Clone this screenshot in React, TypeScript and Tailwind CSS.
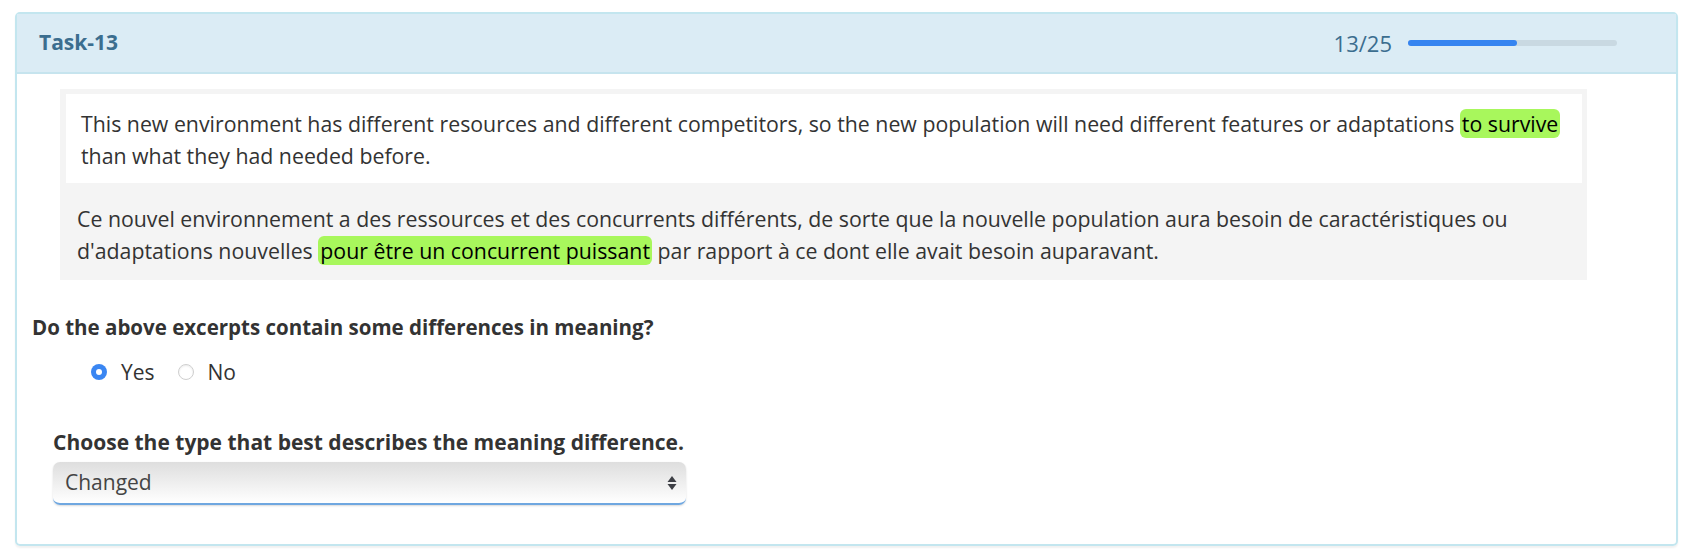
import React from 'react';

const FONT = { fontFamily: '"Open Sans", "Liberation Sans", sans-serif' };

function Radio({ checked, label }: { checked: boolean; label: string }) {
  return (
    <label className="flex items-center gap-[14px]">
      {checked ? (
        <span className="flex h-[16px] w-[16px] items-center justify-center rounded-full bg-[#3a86f2]">
          <span className="h-[6px] w-[6px] rounded-full bg-white" />
        </span>
      ) : (
        <span className="h-[16px] w-[16px] rounded-full border border-[#cfcfcf] bg-white shadow-[inset_0_1px_2px_rgba(0,0,0,0.08)]" />
      )}
      <span className="text-[21px] leading-[28px] text-[#333]">{label}</span>
    </label>
  );
}

export default function App() {
  const done = 13;
  const total = 25;
  return (
    <div className="h-[560px] w-full bg-white pt-[12px]" style={FONT}>
      <div className="ml-[15px] w-[1663px] rounded-[5px] border-2 border-[#c3e6ef] shadow-[0_2px_2px_rgba(0,0,0,0.06)]">
        <div className="flex h-[60px] items-center justify-between border-b-2 border-[#c6e4ee] bg-[#dbecf5] pl-[22px] pr-[59px]">
          <h2 className="text-[21px] font-bold text-[#3b6e8f]">Task-13</h2>
          <div className="flex items-center gap-[16px]">
            <span className="text-[22px] text-[#3b6e8f]">
              {done}/{total}
            </span>
            <div className="h-[6px] w-[209px] rounded-full bg-[#c9d9e2]">
              <div className="h-full rounded-full bg-[#3584f0]" style={{ width: `${(done / total) * 100}%` }} />
            </div>
          </div>
        </div>

        <div className="px-[15px] pb-[39px] pt-[15px]">
          <div className="ml-[28px] w-[1527px] bg-[#f4f4f4] pl-[6px] pr-[5px] pt-[5px]">
            <div className="bg-white pb-[11px] pl-[15px] pr-[20px] pt-[14px] text-[21.3px] leading-[32px] text-[#333]">
              This new environment has different resources and different competitors, so the new population will need
              different features or adaptations{' '}
              <span className="rounded-[6px] bg-[#a8f75c] px-[2px] text-black">to survive</span> than what they had
              needed before.
            </div>
            <div className="pb-[13px] pl-[11px] pr-[20px] pt-[20px] text-[21.3px] leading-[32px] text-[#333]">
              Ce nouvel environnement a des ressources et des concurrents différents, de sorte que la nouvelle population
              aura besoin de caractéristiques ou d'adaptations nouvelles{' '}
              <span className="rounded-[6px] bg-[#a8f75c] px-[2px] text-black">pour être un concurrent puissant</span>{' '}
              par rapport à ce dont elle avait besoin auparavant.
            </div>
          </div>

          <p className="mt-[32px] text-[20.5px] font-bold leading-[30px] text-[#333]">
            Do the above excerpts contain some differences in meaning?
          </p>
          <div className="ml-[59px] mt-[16px] flex items-center gap-[23px]">
            <Radio checked label="Yes" />
            <Radio checked={false} label="No" />
          </div>

          <div className="ml-[21px] mt-[41px] w-[633px]">
            <p className="text-[21px] font-bold leading-[30px] text-[#333]">
              Choose the type that best describes the meaning difference.
            </p>
            <div className="relative mt-[5px]">
              <select
                defaultValue="Changed"
                className="h-[43px] w-full appearance-none rounded-[7px] border-b-2 border-[#6fa7e0] bg-linear-to-b from-[#dedede] to-white pl-[12px] text-[21px] text-[#444] shadow-[0_1px_2px_rgba(0,0,0,0.15)] outline-none"
                style={FONT}
              >
                <option>Changed</option>
                <option>Added</option>
                <option>Removed</option>
              </select>
              <svg
                className="pointer-events-none absolute right-[9px] top-[13px]"
                width="10"
                height="16"
                viewBox="0 0 10 16"
              >
                <path d="M5 1 L9.5 7 H0.5 Z" fill="#3d3f45" />
                <path d="M5 15 L9.5 9 H0.5 Z" fill="#3d3f45" />
              </svg>
            </div>
          </div>
        </div>
      </div>
    </div>
  );
}
